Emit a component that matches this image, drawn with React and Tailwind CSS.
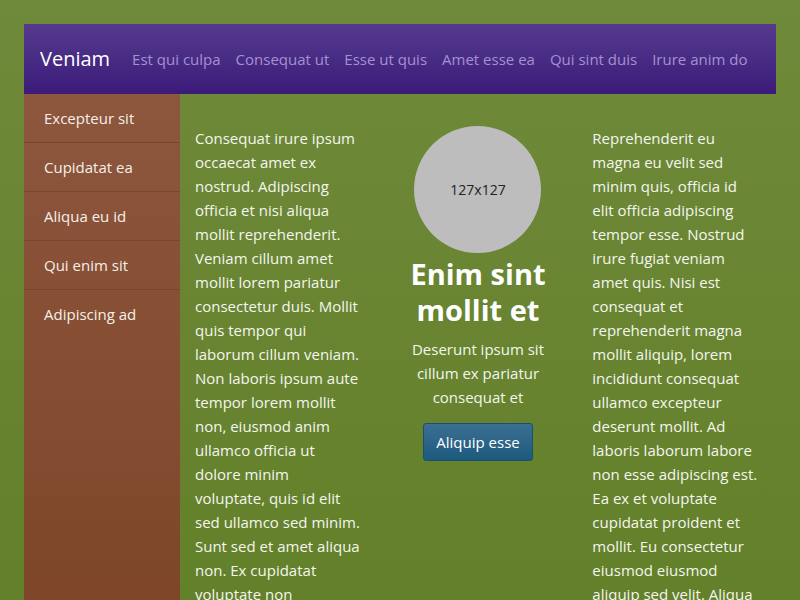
const navLinks = ['Est qui culpa', 'Consequat ut', 'Esse ut quis', 'Amet esse ea', 'Qui sint duis', 'Irure anim do'];
const sideLinks = ['Excepteur sit', 'Cupidatat ea', 'Aliqua eu id', 'Qui enim sit', 'Adipiscing ad'];

// kept as lines so the wrap follows the original
const leftLines = [
  'Consequat irure ipsum',
  'occaecat amet ex',
  'nostrud. Adipiscing',
  'officia et nisi aliqua',
  'mollit reprehenderit.',
  'Veniam cillum amet',
  'mollit lorem pariatur',
  'consectetur duis. Mollit',
  'quis tempor qui',
  'laborum cillum veniam.',
  'Non laboris ipsum aute',
  'tempor lorem mollit',
  'non, eiusmod anim',
  'ullamco officia ut',
  'dolore minim',
  'voluptate, quis id elit',
  'sed ullamco sed minim.',
  'Sunt sed et amet aliqua',
  'non. Ex cupidatat',
  'voluptate non',
  'cillum aute dolore.',
];

const rightLines = [
  'Reprehenderit eu',
  'magna eu velit sed',
  'minim quis, officia id',
  'elit officia adipiscing',
  'tempor esse. Nostrud',
  'irure fugiat veniam',
  'amet quis. Nisi est',
  'consequat et',
  'reprehenderit magna',
  'mollit aliquip, lorem',
  'incididunt consequat',
  'ullamco excepteur',
  'deserunt mollit. Ad',
  'laboris laborum labore',
  'non esse adipiscing est.',
  'Ea ex et voluptate',
  'cupidatat proident et',
  'mollit. Eu consectetur',
  'eiusmod eiusmod',
  'aliquip sed velit. Aliqua',
  'dolore sunt.',
];

function Lines({ lines }) {
  return (
    <p>
      {lines.map((l, i) => (
        <span key={i} className="block whitespace-nowrap">
          {l}
        </span>
      ))}
    </p>
  );
}

export default function App() {
  return (
    <div
      className="min-h-screen bg-gradient-to-b from-[#6f8a3a] to-[#627f28] px-6 pt-6"
      style={{ fontFamily: '"Open Sans", "Noto Sans", sans-serif' }}
    >
      <nav className="flex h-[70px] items-center bg-gradient-to-b from-[#563a8e] to-[#3b1a79] px-4">
        <span className="mr-[22px] text-[20px] text-white">Veniam</span>
        <div className="flex gap-[15px]">
          {navLinks.map((l) => (
            <a key={l} className="text-[15px] text-[#a591cf]">
              {l}
            </a>
          ))}
        </div>
      </nav>

      <div className="flex">
        <aside className="w-[156px] shrink-0 bg-gradient-to-b from-[#8d573e] to-[#7d4426]">
          {sideLinks.map((l, i) => (
            <div
              key={l}
              className={
                i < sideLinks.length - 1
                  ? 'flex h-[49px] items-center border-b border-[#7a452b] pl-5 text-[15px] text-[#f5efe9]'
                  : 'flex h-[48px] items-center pl-5 text-[15px] text-[#f5efe9]'
              }
            >
              {l}
            </div>
          ))}
        </aside>

        <main className="grid flex-1 grid-cols-3 gap-[30px] px-[15px] pt-8 pb-6 text-[15px] leading-6 text-[#f4f6ee]">
          <Lines lines={leftLines} />

          <div className="flex flex-col items-center text-center">
            <div className="flex h-[127px] w-[127px] items-center justify-center rounded-full bg-[#bdbdbd] text-[14px] text-[#222]">
              127x127
            </div>
            <h1 className="mt-[3px] text-[29px] font-bold leading-9 text-white">Enim sint mollit et</h1>
            <p className="mt-[9px]">Deserunt ipsum sit cillum ex pariatur consequat et</p>
            <button className="mt-[14px] h-[38px] w-[110px] rounded-[3px] border border-[#1b4f6e] bg-gradient-to-b from-[#3b6f94] to-[#1c5a7d] text-[15px] text-white">
              Aliquip esse
            </button>
          </div>

          <Lines lines={rightLines} />
        </main>
      </div>
    </div>
  );
}
